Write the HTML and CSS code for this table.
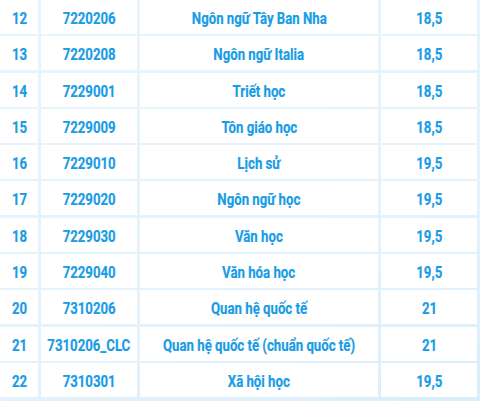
FILE: index.html
```html
<!DOCTYPE html>
<html lang="vi">
<head>
<meta charset="utf-8">
<title>Bảng điểm</title>
<link rel="stylesheet" href="styles.css">
</head>
<body>
<div class="table">
  <div class="cell"><span class="txt">12</span></div><div class="cell"><span class="txt">7220206</span></div><div class="cell"><span class="txt">Ngôn ngữ Tây Ban Nha</span></div><div class="cell"><span class="txt">18,5</span></div>
  <div class="cell"><span class="txt">13</span></div><div class="cell"><span class="txt">7220208</span></div><div class="cell"><span class="txt">Ngôn ngữ Italia</span></div><div class="cell"><span class="txt">18,5</span></div>
  <div class="cell"><span class="txt">14</span></div><div class="cell"><span class="txt">7229001</span></div><div class="cell"><span class="txt">Triết học</span></div><div class="cell"><span class="txt">18,5</span></div>
  <div class="cell"><span class="txt">15</span></div><div class="cell"><span class="txt">7229009</span></div><div class="cell"><span class="txt">Tôn giáo học</span></div><div class="cell"><span class="txt">18,5</span></div>
  <div class="cell"><span class="txt">16</span></div><div class="cell"><span class="txt">7229010</span></div><div class="cell"><span class="txt">Lịch sử</span></div><div class="cell"><span class="txt">19,5</span></div>
  <div class="cell"><span class="txt">17</span></div><div class="cell"><span class="txt">7229020</span></div><div class="cell"><span class="txt">Ngôn ngữ học</span></div><div class="cell"><span class="txt">19,5</span></div>
  <div class="cell"><span class="txt">18</span></div><div class="cell"><span class="txt">7229030</span></div><div class="cell"><span class="txt">Văn học</span></div><div class="cell"><span class="txt">19,5</span></div>
  <div class="cell"><span class="txt">19</span></div><div class="cell"><span class="txt">7229040</span></div><div class="cell"><span class="txt">Văn hóa học</span></div><div class="cell"><span class="txt">19,5</span></div>
  <div class="cell"><span class="txt">20</span></div><div class="cell"><span class="txt">7310206</span></div><div class="cell"><span class="txt">Quan hệ quốc tế</span></div><div class="cell"><span class="txt">21</span></div>
  <div class="cell"><span class="txt">21</span></div><div class="cell"><span class="txt">7310206_CLC</span></div><div class="cell"><span class="txt">Quan hệ quốc tế (chuẩn quốc tế)</span></div><div class="cell"><span class="txt">21</span></div>
  <div class="cell"><span class="txt">22</span></div><div class="cell"><span class="txt">7310301</span></div><div class="cell"><span class="txt">Xã hội học</span></div><div class="cell"><span class="txt">19,5</span></div>
</div>
</body>
</html>
```

FILE: styles.css
```css
html, body {
  margin: 0;
  padding: 0;
}
body {
  width: 480px;
  height: 401px;
  overflow: hidden;
  background: linear-gradient(160deg, #e8f5fd 0%, #e3f2fc 70%, #d8eefb 100%);
}
.table {
  display: grid;
  grid-template-columns: 38px 96px 238px 96px;
  grid-auto-rows: 34px;
  column-gap: 3px;
  row-gap: 2.3px;
  width: 477px;
}
.cell {
  background: #ffffff;
  display: flex;
  align-items: center;
  justify-content: center;
  padding-top: 3px;
  box-sizing: border-box;
  font-family: Roboto, "Liberation Sans", Arial, sans-serif;
  font-weight: bold;
  font-size: 16.5px;
  color: #189ce6;
  white-space: nowrap;
}
.txt {
  display: inline-block;
  flex-shrink: 0;
  transform: scaleX(0.8);
  -webkit-text-stroke: 0.2px #189ce6;
}
```
